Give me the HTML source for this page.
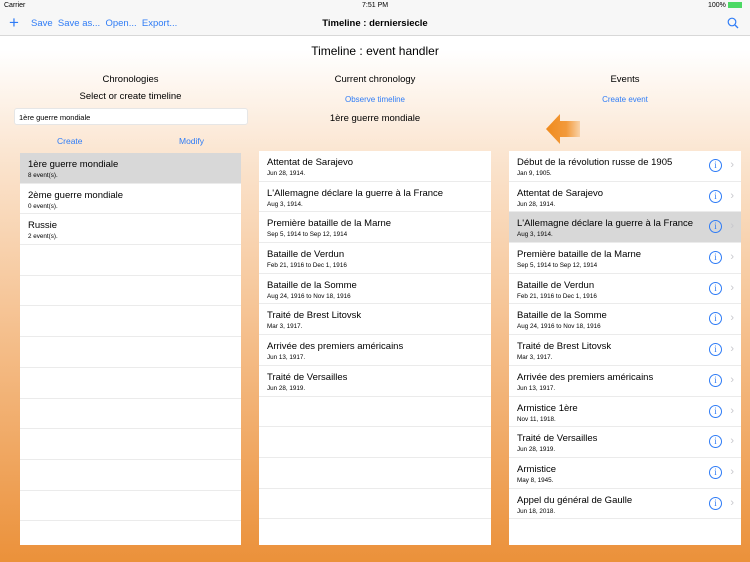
<!DOCTYPE html>
<html><head><meta charset="utf-8"><style>
*{margin:0;padding:0;box-sizing:border-box}
body{width:750px;height:562px;overflow:hidden;font-family:"Liberation Sans",sans-serif;background:linear-gradient(to bottom,#fff 0px,#fff 50px,#fbe6d2 150px,#f5c08e 330px,#eb913a 562px);position:relative;color:#000}
.abs{position:absolute}
.status{top:0;left:0;width:750px;height:12px;font-size:7px;background:#f7f7f7}
.nav{top:12px;left:0;width:750px;height:24px;background:#f7f7f7;border-bottom:1px solid #d8d8d8}
.blue{color:#2f7cf6}
.c{text-align:center}
.panel{background:#fff;overflow:hidden}
.row{height:30.7px;border-bottom:1px solid #ebebeb;padding:6px 0 0 8px;margin-left:0;position:relative}
.row .t{font-size:9.5px;line-height:12px}
.row .s{font-size:6.3px;line-height:9px}
.sel{background:#d8d8d8}
.info{position:absolute;right:19px;top:8px;width:13px;height:13px;border:1px solid #2f7cf6;border-radius:50%;color:#2f7cf6;font-size:9px;line-height:11px;text-align:center;font-family:"Liberation Serif",serif}
.chev{position:absolute;right:7px;top:8px;color:#c7c7cc;font-size:11px}
</style></head><body>
<div class="abs status"><span class="abs" style="left:4px;top:2px">Carrier</span><span class="abs" style="left:362px;top:2px">7:51 PM</span><span class="abs" style="left:708px;top:2px">100% <span style="display:inline-block;width:14px;height:6px;background:#4cd964;vertical-align:middle"></span></span></div>
<div class="abs nav">
<span class="abs blue" style="left:9px;top:2px;font-size:17px;line-height:18px">+</span>
<span class="abs blue" style="left:31px;top:6px;font-size:9.5px">Save&nbsp; Save as...&nbsp; Open...&nbsp; Export...</span>
<span class="abs" style="left:0;width:750px;top:6px;font-size:9.5px;font-weight:bold;text-align:center">Timeline : derniersiecle</span>
<svg class="abs" style="left:727px;top:5px" width="12" height="12"><circle cx="5" cy="5" r="3.8" fill="none" stroke="#2f7cf6" stroke-width="1.2"/><line x1="8" y1="8" x2="11" y2="11" stroke="#2f7cf6" stroke-width="1.3"/></svg>
</div>
<div class="abs c" style="left:0;width:750px;top:44px;font-size:12px">Timeline : event handler</div>
<div class="abs c" style="left:20px;width:221px;top:74px;font-size:9.5px">Chronologies</div>
<div class="abs c" style="left:20px;width:221px;top:91px;font-size:9.5px">Select or create timeline</div>
<div class="abs" style="left:14px;top:108px;width:234px;height:17px;background:#fff;border:1px solid #e6e6e6;border-radius:3px;font-size:7.5px;padding:4px 4px">1ère guerre mondiale</div>
<div class="abs blue" style="left:57px;top:136px;font-size:8.5px">Create</div>
<div class="abs blue" style="left:179px;top:136px;font-size:8.5px">Modify</div>
<div class="abs c" style="left:259px;width:232px;top:74px;font-size:9.5px">Current chronology</div>
<div class="abs c blue" style="left:259px;width:232px;top:95px;font-size:8px">Observe timeline</div>
<div class="abs c" style="left:259px;width:232px;top:113px;font-size:9.5px">1ère guerre mondiale</div>
<div class="abs c" style="left:509px;width:232px;top:74px;font-size:9.5px">Events</div>
<div class="abs c blue" style="left:509px;width:232px;top:95px;font-size:8px">Create event</div>
<svg class="abs" style="left:546px;top:112px" width="36" height="34"><defs><linearGradient id="g" x1="0" x2="1"><stop offset="0" stop-color="#f08a1c"/><stop offset="0.6" stop-color="#f29a3c"/><stop offset="1" stop-color="#f9d2a8"/></linearGradient></defs><path d="M0 17 L14 2 L14 9 L34 9 L34 25 L14 25 L14 32 Z" fill="url(#g)"/></svg>

<div class="abs panel" style="left:20px;top:153px;width:221px;height:392px">
<div class="row sel"><div class="t">1ère guerre mondiale</div><div class="s">8 event(s).</div></div>
<div class="row"><div class="t">2ème guerre mondiale</div><div class="s">0 event(s).</div></div>
<div class="row"><div class="t">Russie</div><div class="s">2 event(s).</div></div>
<div class="row"></div><div class="row"></div><div class="row"></div><div class="row"></div><div class="row"></div><div class="row"></div><div class="row"></div><div class="row"></div><div class="row"></div><div class="row"></div>
</div>
<div class="abs panel" style="left:259px;top:151px;width:232px;height:394px">
<div class="row"><div class="t">Attentat de Sarajevo</div><div class="s">Jun 28, 1914.</div></div>
<div class="row"><div class="t">L'Allemagne déclare la guerre à la France</div><div class="s">Aug 3, 1914.</div></div>
<div class="row"><div class="t">Première bataille de la Marne</div><div class="s">Sep 5, 1914 to Sep 12, 1914</div></div>
<div class="row"><div class="t">Bataille de Verdun</div><div class="s">Feb 21, 1916 to Dec 1, 1916</div></div>
<div class="row"><div class="t">Bataille de la Somme</div><div class="s">Aug 24, 1916 to Nov 18, 1916</div></div>
<div class="row"><div class="t">Traité de Brest Litovsk</div><div class="s">Mar 3, 1917.</div></div>
<div class="row"><div class="t">Arrivée des premiers américains</div><div class="s">Jun 13, 1917.</div></div>
<div class="row"><div class="t">Traité de Versailles</div><div class="s">Jun 28, 1919.</div></div>
<div class="row"></div><div class="row"></div><div class="row"></div><div class="row"></div><div class="row"></div>
</div>
<div class="abs panel" style="left:509px;top:151px;width:232px;height:394px">
<div class="row"><div class="t">Début de la révolution russe de 1905</div><div class="s">Jan 9, 1905.</div><div class="info">i</div><div class="chev">›</div></div>
<div class="row"><div class="t">Attentat de Sarajevo</div><div class="s">Jun 28, 1914.</div><div class="info">i</div><div class="chev">›</div></div>
<div class="row sel"><div class="t">L'Allemagne déclare la guerre à la France</div><div class="s">Aug 3, 1914.</div><div class="info">i</div><div class="chev">›</div></div>
<div class="row"><div class="t">Première bataille de la Marne</div><div class="s">Sep 5, 1914 to Sep 12, 1914</div><div class="info">i</div><div class="chev">›</div></div>
<div class="row"><div class="t">Bataille de Verdun</div><div class="s">Feb 21, 1916 to Dec 1, 1916</div><div class="info">i</div><div class="chev">›</div></div>
<div class="row"><div class="t">Bataille de la Somme</div><div class="s">Aug 24, 1916 to Nov 18, 1916</div><div class="info">i</div><div class="chev">›</div></div>
<div class="row"><div class="t">Traité de Brest Litovsk</div><div class="s">Mar 3, 1917.</div><div class="info">i</div><div class="chev">›</div></div>
<div class="row"><div class="t">Arrivée des premiers américains</div><div class="s">Jun 13, 1917.</div><div class="info">i</div><div class="chev">›</div></div>
<div class="row"><div class="t">Armistice 1ère</div><div class="s">Nov 11, 1918.</div><div class="info">i</div><div class="chev">›</div></div>
<div class="row"><div class="t">Traité de Versailles</div><div class="s">Jun 28, 1919.</div><div class="info">i</div><div class="chev">›</div></div>
<div class="row"><div class="t">Armistice</div><div class="s">May 8, 1945.</div><div class="info">i</div><div class="chev">›</div></div>
<div class="row"><div class="t">Appel du général de Gaulle</div><div class="s">Jun 18, 2018.</div><div class="info">i</div><div class="chev">›</div></div>
<div class="row"></div>
</div>
</body></html>
